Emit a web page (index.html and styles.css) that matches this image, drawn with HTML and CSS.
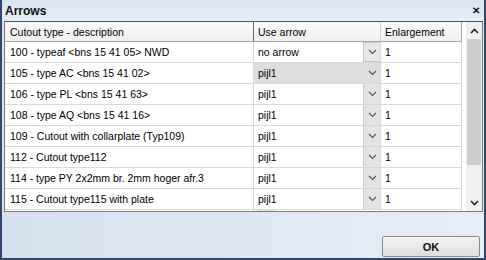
FILE: index.html
```html
<!DOCTYPE html>
<html lang="en">
<head>
  <meta charset="UTF-8">
  <title>Arrows</title>
  <link rel="stylesheet" href="styles.css">
</head>
<body>

  <div class="window">
    <!-- Title bar -->
    <div class="titlebar">
      <div class="title">Arrows</div>
      <div class="close">&#x2715;</div>
    </div>

    <!-- Grid -->
    <div class="grid">
      <div class="table">
        <div class="row head">
          <div class="cell c1">Cutout type - description</div>
          <div class="cell c2">Use arrow</div>
          <div class="cell c3">Enlargement</div>
        </div>
        <div class="row">
          <div class="cell c1">100 - typeaf &lt;bns 15 41 05&gt; NWD</div>
          <div class="cell c2 combo open"><span>no arrow</span><div class="drop"><svg width="9" height="6" viewBox="0 0 9 6"><polyline points="1,1 4.5,4.5 8,1" fill="none" stroke="#555" stroke-width="1.2"/></svg></div></div>
          <div class="cell c3">1</div>
        </div>
        <div class="row">
          <div class="cell c1">105 - type AC &lt;bns 15 41 02&gt;</div>
          <div class="cell c2 combo active"><span>pijl1</span><div class="drop"><svg width="9" height="6" viewBox="0 0 9 6"><polyline points="1,1 4.5,4.5 8,1" fill="none" stroke="#555" stroke-width="1.2"/></svg></div></div>
          <div class="cell c3">1</div>
        </div>
        <div class="row">
          <div class="cell c1">106 - type PL &lt;bns 15 41 63&gt;</div>
          <div class="cell c2 combo"><span>pijl1</span><div class="drop"><svg width="9" height="6" viewBox="0 0 9 6"><polyline points="1,1 4.5,4.5 8,1" fill="none" stroke="#555" stroke-width="1.2"/></svg></div></div>
          <div class="cell c3">1</div>
        </div>
        <div class="row">
          <div class="cell c1">108 - type AQ &lt;bns 15 41 16&gt;</div>
          <div class="cell c2 combo"><span>pijl1</span><div class="drop"><svg width="9" height="6" viewBox="0 0 9 6"><polyline points="1,1 4.5,4.5 8,1" fill="none" stroke="#555" stroke-width="1.2"/></svg></div></div>
          <div class="cell c3">1</div>
        </div>
        <div class="row">
          <div class="cell c1">109 - Cutout with collarplate (Typ109)</div>
          <div class="cell c2 combo"><span>pijl1</span><div class="drop"><svg width="9" height="6" viewBox="0 0 9 6"><polyline points="1,1 4.5,4.5 8,1" fill="none" stroke="#555" stroke-width="1.2"/></svg></div></div>
          <div class="cell c3">1</div>
        </div>
        <div class="row">
          <div class="cell c1">112 - Cutout type112</div>
          <div class="cell c2 combo"><span>pijl1</span><div class="drop"><svg width="9" height="6" viewBox="0 0 9 6"><polyline points="1,1 4.5,4.5 8,1" fill="none" stroke="#555" stroke-width="1.2"/></svg></div></div>
          <div class="cell c3">1</div>
        </div>
        <div class="row">
          <div class="cell c1">114 - type PY 2x2mm br. 2mm hoger afr.3</div>
          <div class="cell c2 combo"><span>pijl1</span><div class="drop"><svg width="9" height="6" viewBox="0 0 9 6"><polyline points="1,1 4.5,4.5 8,1" fill="none" stroke="#555" stroke-width="1.2"/></svg></div></div>
          <div class="cell c3">1</div>
        </div>
        <div class="row">
          <div class="cell c1">115 - Cutout type115 with plate</div>
          <div class="cell c2 combo"><span>pijl1</span><div class="drop"><svg width="9" height="6" viewBox="0 0 9 6"><polyline points="1,1 4.5,4.5 8,1" fill="none" stroke="#555" stroke-width="1.2"/></svg></div></div>
          <div class="cell c3">1</div>
        </div>
        <div class="row stub">
          <div class="cell c1"></div>
          <div class="cell c2 combo"><div class="drop"></div></div>
          <div class="cell c3"></div>
        </div>
      </div>

      <div class="filler"></div>

      <!-- Scrollbar -->
      <div class="scrollbar">
        <div class="sb-btn"><svg width="9" height="6" viewBox="0 0 9 6"><polyline points="1,5 4.5,1.5 8,5" fill="none" stroke="#222" stroke-width="1.6"/></svg></div>
        <div class="sb-thumb"></div>
        <div class="sb-track"></div>
        <div class="sb-btn"><svg width="9" height="6" viewBox="0 0 9 6"><polyline points="1,1 4.5,4.5 8,1" fill="none" stroke="#222" stroke-width="1.6"/></svg></div>
      </div>
    </div>

    <!-- Footer -->
    <div class="footer">
      <button class="ok">OK</button>
    </div>
  </div>

</body>
</html>
```

FILE: styles.css
```css
body {
  font-family: 'Liberation Sans', Arial, sans-serif;
  font-size: 10.5px;
  color: #000000;
  margin: 0;
  padding: 0;
  background-color: #ffffff;
}

.window {
  width: 486px;
  height: 260px;
  box-sizing: border-box;
  border-left: 2px solid #34466b;
  border-right: 2px solid #34466b;
  border-bottom: 2px solid #34466b;
  background: linear-gradient(to right, #d6e1f0, #e6eef8);
  display: flex;
  flex-direction: column;
}

/* Title bar */
.titlebar {
  height: 21px;
  display: flex;
  justify-content: space-between;
  align-items: center;
  padding: 0 4px 0 3px;
  background: linear-gradient(to bottom, #dbe5f2, #e4ecf7);
}
.titlebar .title {
  font-size: 12px;
  font-weight: bold;
  color: #111111;
}
.titlebar .close {
  font-size: 10px;
  font-weight: bold;
  color: #111111;
  margin-top: -1px;
}

/* Grid */
.grid {
  margin: 0 1px 0 2px;
  height: 191px;
  box-sizing: border-box;
  border: 1px solid #7a7a7a;
  border-top-color: #555555;
  background-color: #ffffff;
  display: flex;
  overflow: hidden;
}
.table {
  width: 457px;
}
.row {
  display: flex;
  height: 21px;
  box-sizing: border-box;
  border-bottom: 1px solid #d9d9d9;
}
.row.head {
  height: 20px;
  background: linear-gradient(to bottom, #fafafa, #f0f0f0);
  border-bottom: 1px solid #a8a8a8;
}
.cell {
  display: flex;
  align-items: center;
  box-sizing: border-box;
  border-right: 1px solid #d9d9d9;
  white-space: nowrap;
  overflow: hidden;
}
.c1 {
  width: 249px;
  padding-left: 5px;
}
.c2 {
  width: 127px;
  padding-left: 4px;
}
.c3 {
  width: 81px;
  padding-left: 4px;
}
.head .cell {
  border-right-color: #d0d0d0;
}
.head .c2 {
  border-left: 1px solid #6a6a6a;
  margin-left: -1px;
  width: 128px;
}
.head .c3 {
  border-right-color: #a8a8a8;
}

/* Combo cells */
.combo {
  justify-content: space-between;
  padding-right: 0;
}
.combo .drop {
  width: 16px;
  align-self: stretch;
  display: flex;
  align-items: center;
  justify-content: center;
  background-color: #e4e4e4;
  border-left: 1px solid #cfcfcf;
}
.combo.open .drop {
  border: 1px solid #c6c6c6;
  border-right: none;
  background-color: #e8e8e8;
}
.combo.active {
  background-color: #dedede;
}
.combo.active .drop {
  background-color: #dedede;
  border-left: none;
}

.filler {
  width: 4px;
}

/* Scrollbar */
.scrollbar {
  width: 16px;
  display: flex;
  flex-direction: column;
  background-color: #f0f0f0;
}
.sb-btn {
  height: 17px;
  display: flex;
  align-items: center;
  justify-content: center;
  background-color: #f0f0f0;
}
.sb-thumb {
  height: 126px;
  margin: 0 1px;
  background-color: #cdcdcd;
}
.sb-track {
  flex: 1;
}

/* Footer */
.footer {
  flex: 1;
  display: flex;
  justify-content: flex-end;
  align-items: flex-end;
  padding: 0 4px 1px 0;
}
.ok {
  width: 98px;
  height: 21px;
  font-family: 'Liberation Sans', Arial, sans-serif;
  font-size: 11px;
  font-weight: bold;
  color: #111111;
  background: linear-gradient(to bottom, #f4f4f4, #dedede);
  border: 1px solid #8a8a8a;
  border-radius: 2px;
  padding: 0;
}
```
